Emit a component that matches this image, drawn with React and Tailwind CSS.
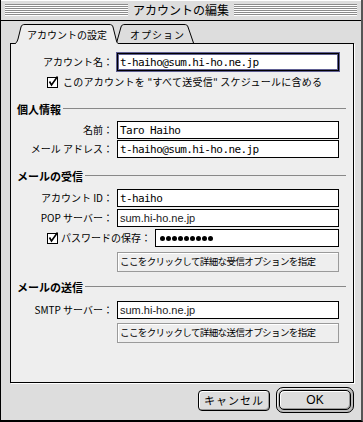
import React from 'react';

const jp = "font-['Noto_Sans_CJK_JP',sans-serif]";
const mono = "font-['DejaVu_Sans_Mono','Noto_Sans_CJK_JP',monospace] text-[11px] tracking-[-0.6px]";

function Check() {
  return (
    <svg width="12" height="12" viewBox="0 0 12 12" className="flex-none">
      <rect x="0.5" y="1.5" width="10" height="10" fill="#fff" stroke="#000" />
      <polyline points="2.5,5.5 4.5,9 10.5,0.5" fill="none" stroke="#000" strokeWidth="1.6" />
    </svg>
  );
}

function Input({ children, focus, className = 'w-[222px]' }) {
  return (
    <div
      className={`${className} h-[18px] flex-none bg-white border border-black flex items-center pl-[2px] overflow-hidden ${
        focus ? 'shadow-[0_0_0_1px_#5e5e92,inset_0_0_0_1px_#5e5e92]' : ''
      }`}
    >
      {children}
    </div>
  );
}

function Row({ label, children, className = '' }) {
  return (
    <div className={`flex items-center ${className}`}>
      <div className="w-[103px] text-right pr-[1px] whitespace-nowrap">{label}</div>
      <div className="ml-[3px]">{children}</div>
    </div>
  );
}

function Heading({ title, className = '' }) {
  return (
    <div className={`flex items-center h-[12px] ${className}`}>
      <span className="ml-[6px] text-[11px] font-bold leading-none">{title}</span>
      <div className="flex-1 h-px bg-[#888888] ml-[2px] mr-[7px] -mt-[2px]" />
    </div>
  );
}

function OptionButton({ children, className = '' }) {
  return (
    <div
      className={`ml-[106px] w-[222px] h-[20px] border border-[#9a9a9a] bg-[#eeeeee] shadow-[inset_1px_1px_0_#ffffff] flex items-center pl-[2px] whitespace-nowrap overflow-hidden text-[9.5px] tracking-[-0.6px] ${className}`}
    >
      {children}
    </div>
  );
}

export default function App() {
  return (
    <div className={`w-[363px] h-[422px] bg-[#dddddd] border-l border-b-2 border-r-2 border-l-black border-b-black border-r-[#555555] text-black ${jp} text-[10px] leading-none overflow-hidden`}>
      {/* Title bar */}
      <div className="h-[21px] flex items-center border-b border-black px-[4px] shadow-[inset_0_1px_0_#ffffff]">
        <div className="flex-1 h-[12px] bg-[repeating-linear-gradient(to_bottom,#8c8c8c_0px,#8c8c8c_1px,#ffffff_1px,#ffffff_2px)]" />
        <div className="px-[5px] text-[12px] leading-none">アカウントの編集</div>
        <div className="flex-1 h-[12px] bg-[repeating-linear-gradient(to_bottom,#8c8c8c_0px,#8c8c8c_1px,#ffffff_1px,#ffffff_2px)]" />
      </div>

      {/* Tabs */}
      <div className="h-[22px] flex items-end pl-[12px]">
        <div className="relative z-10 w-[108px] h-[20px] -mb-px flex items-center pl-[14px] pt-[2px]">
          <svg className="absolute inset-0" width="108" height="20" viewBox="0 0 108 20">
            <path
              d="M0.5,20 C3,20 4,18 5,15 L8,3 C8.5,1.2 9.5,0.5 12,0.5 L96,0.5 C98.5,0.5 99.5,1.2 100,3 L103.5,17 C104,19 105,20 107.5,20"
              fill="#eeeeee"
              stroke="#000"
            />
          </svg>
          <span className="relative">アカウントの設定</span>
        </div>
        <div className="relative w-[78px] h-[19px] -ml-[5px] flex items-center pl-[14px] pt-[2px]">
          <svg className="absolute inset-0" width="78" height="19" viewBox="0 0 78 19">
            <path
              d="M0.5,19 L5,3 C5.5,1.2 6.5,0.5 9,0.5 L68,0.5 C70.5,0.5 71.5,1.2 72,3 L77.5,19"
              fill="#dddddd"
              stroke="#000"
            />
          </svg>
          <span className="relative tracking-[1px]">オプション</span>
        </div>
      </div>

      {/* Panel */}
      <div className="ml-[9px] w-[344px] h-[340px] border border-black bg-[#eeeeee] shadow-[1px_1px_0_#ffffff]">
        <Row label="アカウント名：" className="mt-[9px]">
          <Input focus>
            <span className={mono}>t-haiho@sum.hi-ho.ne.jp</span>
          </Input>
        </Row>

        <div className="flex items-center mt-[5px] h-[12px] ml-[36px]">
          <Check />
          <span className="ml-[4px] whitespace-nowrap tracking-[0.25px]">このアカウントを "すべて送受信" スケジュールに含める</span>
        </div>

        <Heading title="個人情報" className="mt-[15px]" />

        <Row label="名前：" className="mt-[6px]">
          <Input>
            <span className={mono}>Taro Haiho</span>
          </Input>
        </Row>
        <Row label="メール アドレス：" className="mt-[1px]">
          <Input>
            <span className={mono}>t-haiho@sum.hi-ho.ne.jp</span>
          </Input>
        </Row>

        <Heading title="メールの受信" className="mt-[12px]" />

        <Row label="アカウント ID：" className="mt-[7px]">
          <Input>
            <span className={mono}>t-haiho</span>
          </Input>
        </Row>
        <Row label="POP サーバー：" className="mt-[2px]">
          <Input>
            <span className="font-['Liberation_Sans',sans-serif] text-[11px] text-[#222222]">sum.hi-ho.ne.jp</span>
          </Input>
        </Row>
        <div className="flex items-center mt-[2px]">
          <div className="ml-[36px] flex items-center w-[108px]">
            <Check />
            <span className="ml-[2px] whitespace-nowrap">パスワードの保存：</span>
          </div>
          <Input className="w-[184px]">
            <div className="flex gap-[1px] pl-[2px]">
              {Array.from({ length: 9 }).map((_, i) => (
                <span key={i} className="w-[5px] h-[5px] rounded-full bg-black" />
              ))}
            </div>
          </Input>
        </div>

        <OptionButton className="mt-[5px]">ここをクリックして詳細な受信オプションを指定</OptionButton>

        <Heading title="メールの送信" className="mt-[9px]" />

        <Row label="SMTP サーバー：" className="mt-[8px]">
          <Input>
            <span className="font-['Liberation_Sans',sans-serif] text-[11px] text-[#222222]">sum.hi-ho.ne.jp</span>
          </Input>
        </Row>

        <OptionButton className="mt-[4px]">ここをクリックして詳細な送信オプションを指定</OptionButton>
      </div>

      {/* Bottom buttons */}
      <div className="mt-[4px] h-[26px] flex items-center justify-end pr-[7px] gap-[6px]">
        <div className="w-[72px] h-[21px] rounded-[4px] border border-black bg-[#dddddd] shadow-[inset_1px_1px_0_#ffffff,inset_-1px_-1px_0_#999999] flex items-center justify-center text-[11px] tracking-[1px]">
          キャンセル
        </div>
        <div className="w-[78px] h-[26px] rounded-[7px] border border-black bg-[#bbbbbb] p-[2px] shadow-[inset_1px_1px_0_#eeeeee]">
          <div className="w-full h-full rounded-[5px] border border-black bg-[#dddddd] shadow-[inset_1px_1px_0_#ffffff,inset_-1px_-1px_0_#999999] flex items-center justify-center font-['Liberation_Sans',sans-serif] text-[12px]">
            OK
          </div>
        </div>
      </div>
    </div>
  );
}
